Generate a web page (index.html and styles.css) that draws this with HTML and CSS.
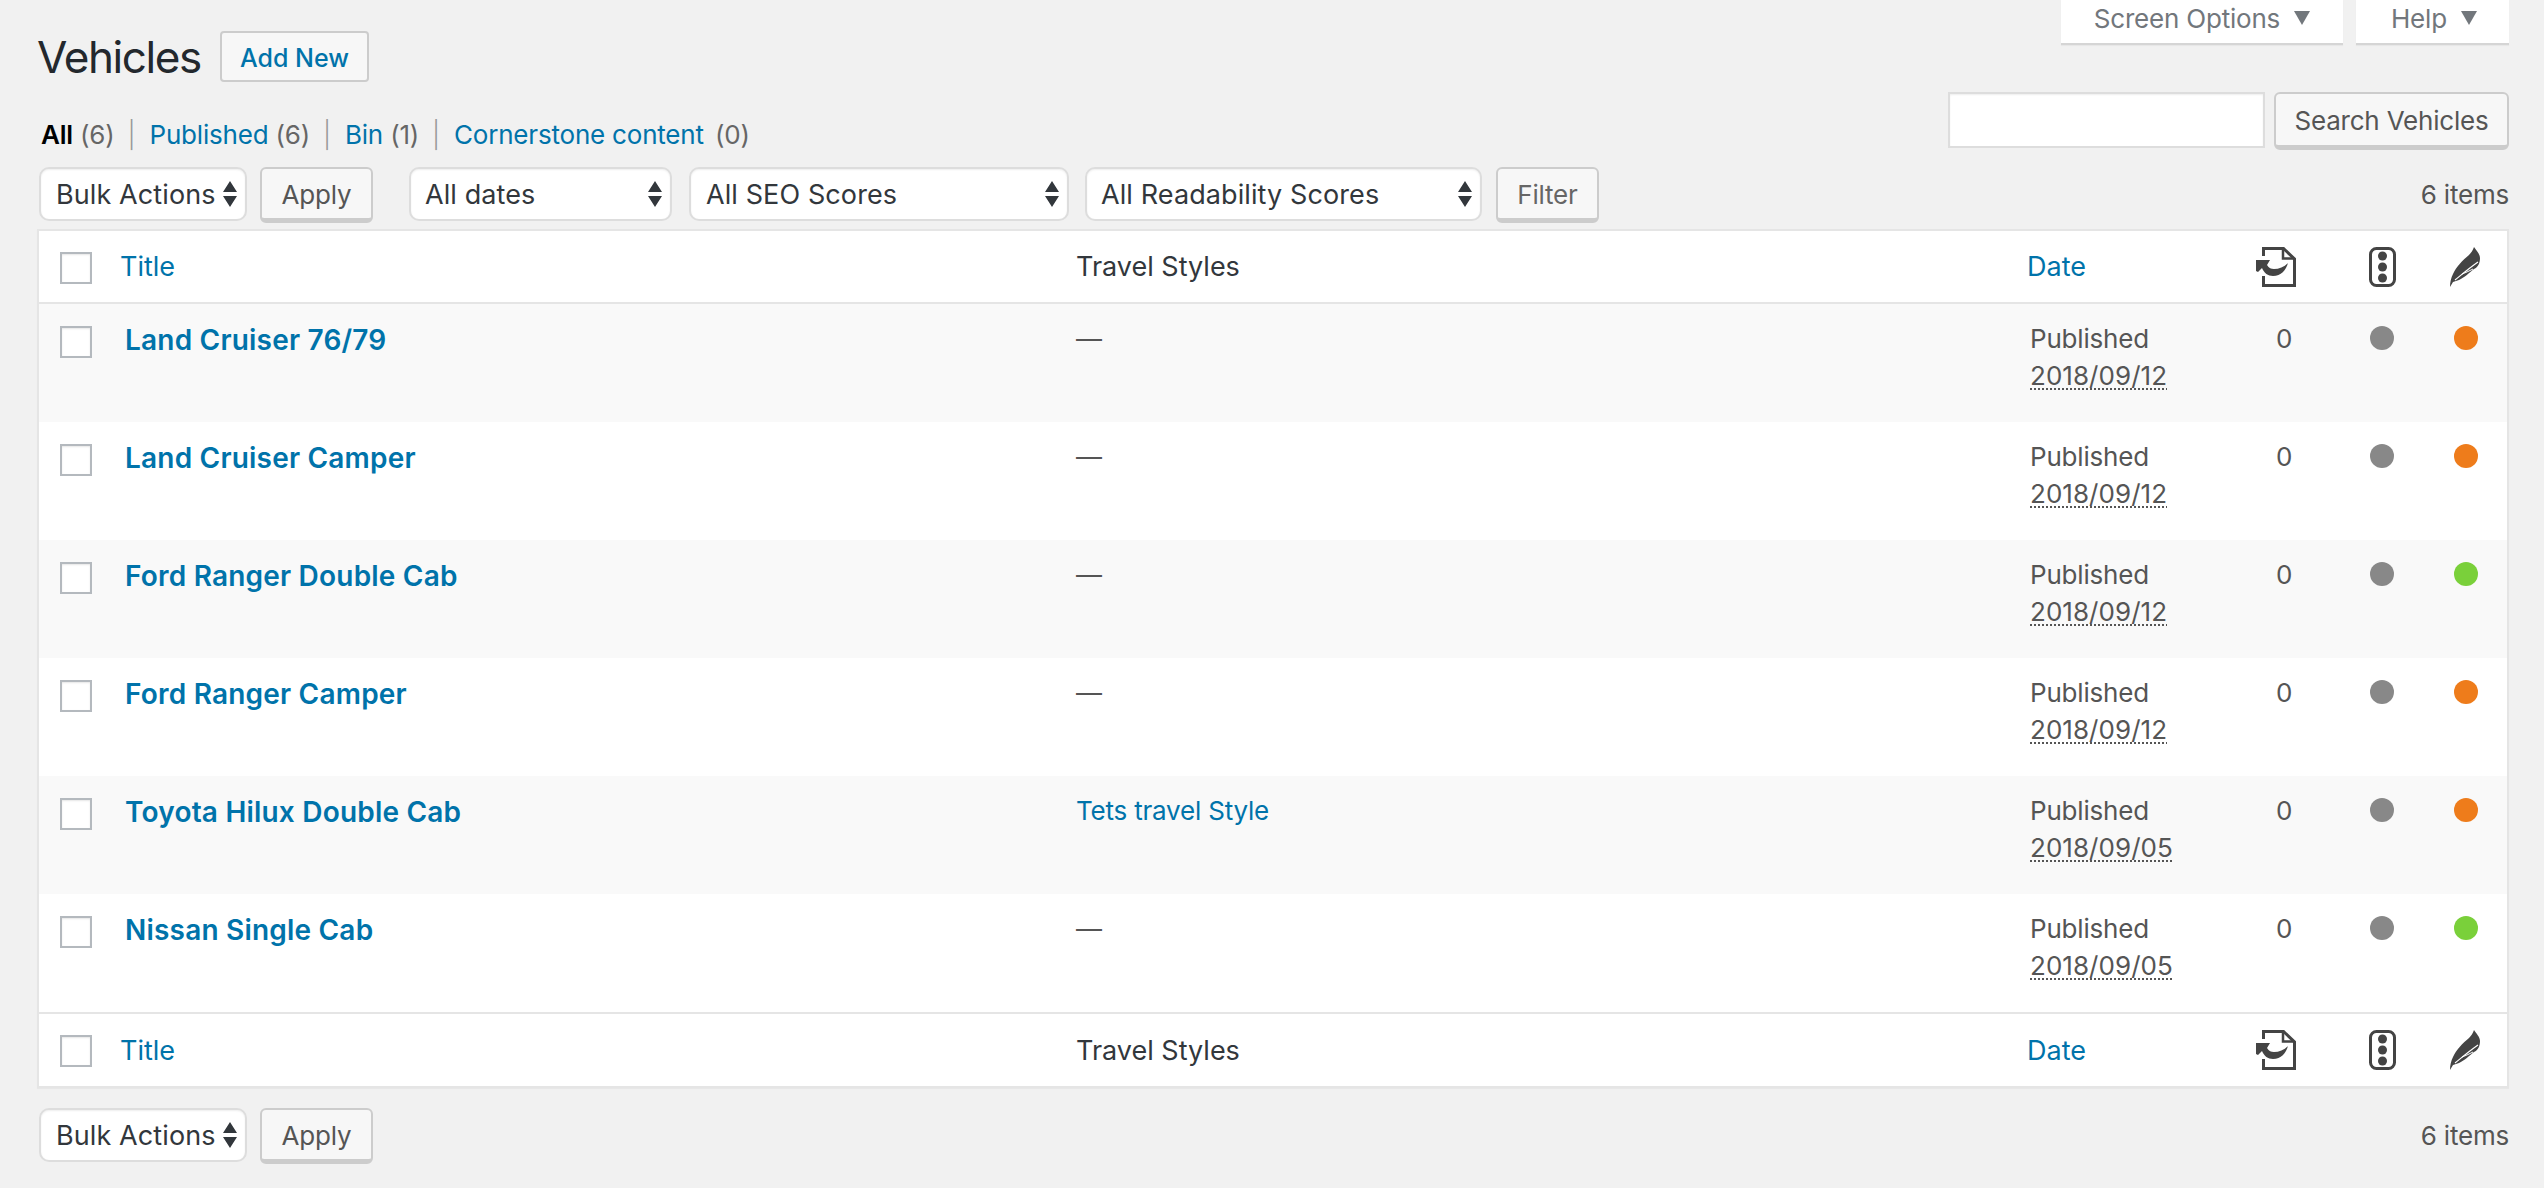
FILE: index.html
```html
<!DOCTYPE html>
<html lang="en">
<head>
    <meta charset="UTF-8">
    <title>Vehicles</title>
    <link rel="stylesheet" href="styles.css">
</head>
<body>
    <svg class="defs" width="0" height="0">
        <symbol id="icon-links" viewBox="0 0 40 40">
            <path d="M7.500 9V1.500H27.500L38.500 12V38.500H7.500V29" fill="none" stroke="#444" stroke-width="3"/>
            <path d="M27 1.500V11.500H38" fill="none" stroke="#444" stroke-width="2.500"/>
            <path d="M0 13H14L11 18C13 21 15 22 18 22C23 22 28 20 32 16C30 23 25 29 17 29C12 29 8 26 6 21L2 25L0 24Z" fill="#444"/>
        </symbol>
        <symbol id="icon-light" viewBox="0 0 27 40">
            <rect x="1.500" y="1.500" width="24" height="37" rx="6" fill="none" stroke="#444" stroke-width="3"/>
            <circle cx="13.500" cy="9" r="4.500" fill="#444"/>
            <circle cx="13.500" cy="20" r="4.500" fill="#444"/>
            <circle cx="13.500" cy="31" r="4.500" fill="#444"/>
        </symbol>
        <symbol id="icon-feather" viewBox="0 0 31 40">
            <path d="M24 0C26 3 30 7 30 11C30 16 28 20 24 22C20 25 14 31 9 33C7 34 5 34 3 35L0 40C0 35 1 31 3 27C6 20 13 13 19 8C21 6 23 3 24 0Z" fill="#444"/>
            <path d="M5 33C10 29 18 22 28 15" fill="none" stroke="#fff" stroke-width="1.200"/>
            <path d="M12 27C15 26 19 24 23 22" fill="none" stroke="#fff" stroke-width="1"/>
        </symbol>
    </svg>

    <div class="top">
        <div class="top-left">
            <div class="title-row">
                <h1>Vehicles</h1>
                <a class="add-new" href="#">Add New</a>
            </div>
            <ul class="subsub">
                <li><a class="current" href="#">All</a> <span>(6)</span></li>
                <li><a href="#">Published</a> <span>(6)</span></li>
                <li><a href="#">Bin</a> <span>(1)</span></li>
                <li><a href="#">Cornerstone content</a> <span class="gap">(0)</span></li>
            </ul>
        </div>
        <div class="top-right">
            <div class="tabs">
                <button class="tab tab-options">Screen Options <i class="caret"></i></button>
                <button class="tab tab-help">Help <i class="caret"></i></button>
            </div>
            <div class="search">
                <input type="search" class="search-input">
                <button class="btn btn-search">Search Vehicles</button>
            </div>
        </div>
    </div>

    <div class="tablenav">
        <select class="sel sel-bulk"><option>Bulk Actions</option></select>
        <button class="btn btn-apply">Apply</button>
        <select class="sel sel-dates"><option>All dates</option></select>
        <select class="sel sel-seo"><option>All SEO Scores</option></select>
        <select class="sel sel-read"><option>All Readability Scores</option></select>
        <button class="btn btn-filter">Filter</button>
        <span class="count">6 items</span>
    </div>

    <table class="list">
        <colgroup>
            <col class="c-cb"><col class="c-title"><col class="c-styles"><col class="c-date"><col class="c-links"><col class="c-seo"><col class="c-read">
        </colgroup>
        <thead>
            <tr>
                <th><span class="cb"></span></th>
                <th><a href="#">Title</a></th>
                <th>Travel Styles</th>
                <th><a href="#">Date</a></th>
                <th class="th-links"><svg class="ico i-links"><use href="#icon-links"/></svg></th>
                <th class="mid"><svg class="ico i-light"><use href="#icon-light"/></svg></th>
                <th class="mid"><svg class="ico i-feather"><use href="#icon-feather"/></svg></th>
            </tr>
        </thead>
        <tbody>
            <tr class="alt">
                <td><span class="cb"></span></td>
                <td class="name"><a href="#">Land Cruiser 76/79</a></td>
                <td>—</td>
                <td class="date">Published<br><abbr>2018/09/12</abbr></td>
                <td class="num">0</td>
                <td class="mid"><i class="dot grey"></i></td>
                <td class="mid"><i class="dot orange"></i></td>
            </tr>
            <tr>
                <td><span class="cb"></span></td>
                <td class="name"><a href="#">Land Cruiser Camper</a></td>
                <td>—</td>
                <td class="date">Published<br><abbr>2018/09/12</abbr></td>
                <td class="num">0</td>
                <td class="mid"><i class="dot grey"></i></td>
                <td class="mid"><i class="dot orange"></i></td>
            </tr>
            <tr class="alt">
                <td><span class="cb"></span></td>
                <td class="name"><a href="#">Ford Ranger Double Cab</a></td>
                <td>—</td>
                <td class="date">Published<br><abbr>2018/09/12</abbr></td>
                <td class="num">0</td>
                <td class="mid"><i class="dot grey"></i></td>
                <td class="mid"><i class="dot green"></i></td>
            </tr>
            <tr>
                <td><span class="cb"></span></td>
                <td class="name"><a href="#">Ford Ranger Camper</a></td>
                <td>—</td>
                <td class="date">Published<br><abbr>2018/09/12</abbr></td>
                <td class="num">0</td>
                <td class="mid"><i class="dot grey"></i></td>
                <td class="mid"><i class="dot orange"></i></td>
            </tr>
            <tr class="alt">
                <td><span class="cb"></span></td>
                <td class="name"><a href="#">Toyota Hilux Double Cab</a></td>
                <td><a href="#">Tets travel Style</a></td>
                <td class="date">Published<br><abbr>2018/09/05</abbr></td>
                <td class="num">0</td>
                <td class="mid"><i class="dot grey"></i></td>
                <td class="mid"><i class="dot orange"></i></td>
            </tr>
            <tr>
                <td><span class="cb"></span></td>
                <td class="name"><a href="#">Nissan Single Cab</a></td>
                <td>—</td>
                <td class="date">Published<br><abbr>2018/09/05</abbr></td>
                <td class="num">0</td>
                <td class="mid"><i class="dot grey"></i></td>
                <td class="mid"><i class="dot green"></i></td>
            </tr>
        </tbody>
        <tfoot>
            <tr>
                <th><span class="cb"></span></th>
                <th><a href="#">Title</a></th>
                <th>Travel Styles</th>
                <th><a href="#">Date</a></th>
                <th class="th-links"><svg class="ico i-links"><use href="#icon-links"/></svg></th>
                <th class="mid"><svg class="ico i-light"><use href="#icon-light"/></svg></th>
                <th class="mid"><svg class="ico i-feather"><use href="#icon-feather"/></svg></th>
            </tr>
        </tfoot>
    </table>

    <div class="tablenav tablenav-bottom">
        <select class="sel sel-bulk"><option>Bulk Actions</option></select>
        <button class="btn btn-apply">Apply</button>
        <span class="count">6 items</span>
    </div>
</body>
</html>
```

FILE: styles.css
```css
* {
    box-sizing: border-box;
}
body {
    margin: 0;
    padding: 0 35px 0 37px;
    background: #f1f1f1;
    color: #444;
    font-family: Inter, "Liberation Sans", sans-serif;
    font-size: 26px;
    line-height: 37px;
    letter-spacing: -0.2px;
    overflow: hidden;
}
a {
    color: #0073aa;
    text-decoration: none;
}
.defs {
    display: block;
    height: 0;
}

/* heading block */
.top {
    display: flex;
    justify-content: space-between;
    height: 167px;
}
.title-row {
    display: flex;
    align-items: center;
    gap: 19px;
    margin-top: 30px;
}
h1 {
    margin: 2px 0 0;
    color: #23282d;
    font-size: 44px;
    font-weight: 400;
    line-height: 51px;
    letter-spacing: -1.4px;
}
.add-new {
    width: 149px;
    height: 51px;
    border: 2px solid #ccc;
    border-radius: 4px;
    background: #f7f7f7;
    font-weight: 500;
    font-size: 25px;
    line-height: 50px;
    letter-spacing: 0;
    text-align: center;
}
.subsub {
    display: flex;
    margin: 33px 0 0 4px;
    padding: 0;
    list-style: none;
    color: #666;
}
.subsub li::after {
    content: "|";
    margin: 0 14px 0 13px;
    color: #999;
    font-weight: 300;
}
.subsub li:last-child::after {
    content: none;
}
.subsub .current {
    color: #000;
    font-weight: 600;
}
.subsub .gap {
    margin-left: 4px;
}
.top-right {
    display: flex;
    flex-direction: column;
    align-items: flex-end;
}
.tabs {
    display: flex;
    gap: 13px;
}
.tab {
    height: 45px;
    padding: 0 0 16px;
    border: 0;
    border-bottom: 2px solid #d5d5d5;
    background: #fff;
    box-shadow: 0 1px 1px rgba(0, 0, 0, 0.04);
    color: #72777c;
    font: inherit;
    letter-spacing: inherit;
}
.tab-options {
    width: 282px;
}
.tab-help {
    width: 153px;
    padding-left: 3px;
}
.caret {
    display: inline-block;
    width: 0;
    height: 0;
    margin: 0 0 3px 7px;
    border: 8px solid transparent;
    border-top: 14px solid #72777c;
    border-bottom: 0;
}
.search {
    display: flex;
    gap: 9px;
    margin-top: 47px;
}
.search-input {
    width: 317px;
    height: 56px;
    border: 2px solid #ddd;
    background: #fff;
    box-shadow: inset 0 1px 2px rgba(0, 0, 0, 0.07);
}

/* buttons and selects */
.btn {
    height: 56px;
    padding: 2px 0 0;
    border: 2px solid #ccc;
    border-bottom-width: 5px;
    border-radius: 6px;
    background: #f7f7f7;
    color: #555;
    font: inherit;
    letter-spacing: inherit;
}
.btn-search {
    width: 235px;
    height: 58px;
}
.btn-apply {
    width: 113px;
    margin-left: 13px;
}
.btn-filter {
    width: 103px;
    margin-left: 14px;
    color: #666;
}
.sel {
    height: 54px;
    padding: 0 0 0 15px;
    border: 2px solid #ddd;
    border-radius: 10px;
    background-color: #fff;
    background-image: url("data:image/svg+xml;utf8,<svg xmlns='http://www.w3.org/2000/svg' width='14' height='26'><path d='M7 0l7 11H0zM7 26L0 15h14z' fill='%2332373c'/></svg>");
    background-position: right 8px center;
    background-repeat: no-repeat;
    appearance: none;
    color: #32373c;
    font: inherit;
    font-size: 27px;
    letter-spacing: 0.1px;
    box-shadow: inset 0 1px 2px rgba(0, 0, 0, 0.07);
}
.sel-bulk {
    width: 208px;
    margin-left: 2px;
}
.sel-dates {
    width: 263px;
    margin-left: 36px;
    padding-left: 14px;
}
.sel-seo {
    width: 380px;
    margin-left: 17px;
}
.sel-read {
    width: 397px;
    margin-left: 16px;
    padding-left: 14px;
}
.tablenav {
    display: flex;
    align-items: flex-start;
    height: 62px;
}
.count {
    margin: 9px 0 0 auto;
    color: #555;
}
.tablenav-bottom {
    margin-top: 20px;
}

/* table */
.list {
    width: 2472px;
    border: 2px solid #e5e5e5;
    border-spacing: 0;
    table-layout: fixed;
    background: #fff;
    box-shadow: 0 1px 1px rgba(0, 0, 0, 0.04);
}
.c-cb { width: 65px; }
.c-title { width: 956px; }
.c-styles { width: 951px; }
.c-date { width: 229px; }
.c-links { width: 100px; }
.c-seo { width: 84px; }
.c-read { width: 83px; }
th {
    height: 73px;
    padding: 0 16px;
    color: #32373c;
    font-size: 27px;
    font-weight: 400;
    letter-spacing: 0;
    text-align: left;
    vertical-align: middle;
}
th:first-child,
td:first-child {
    padding: 0 0 0 21px;
}
th .cb {
    margin-top: 2px;
}
thead th {
    border-bottom: 2px solid #e5e5e5;
}
tfoot th {
    height: 74px;
    border-top: 2px solid #e5e5e5;
}
td {
    height: 118px;
    padding: 16px;
    vertical-align: top;
    color: #555;
}
td:first-child {
    padding-top: 22px;
}
.alt {
    background: #f9f9f9;
}
.cb {
    display: block;
    width: 32px;
    height: 32px;
    border: 2px solid #b4b9be;
    background: #fff;
    box-shadow: inset 0 1px 2px rgba(0, 0, 0, 0.1);
}
td.name {
    padding-top: 18px;
}
.name a {
    padding-left: 5px;
    font-weight: 600;
    font-size: 28px;
    letter-spacing: 0.2px;
}
.date {
    padding-left: 19px;
}
abbr {
    letter-spacing: 0.05px;
    text-decoration: underline dotted 2px #555;
    text-underline-offset: 3px;
}
.num {
    padding-left: 36px;
}
.th-links {
    padding-left: 16px;
}
th.mid,
td.mid {
    padding-left: 0;
    padding-right: 0;
    text-align: center;
}
.ico {
    display: block;
    height: 40px;
}
th.mid .ico {
    margin: 0 auto;
}
.i-links { width: 40px; }
.i-light { width: 27px; }
.i-feather { width: 31px; }
.dot {
    display: block;
    width: 24px;
    height: 24px;
    margin: 6px auto 0;
    border-radius: 50%;
}
.grey { background: #888; }
.orange { background: #ee7c1b; }
.green { background: #7ad03a; }
```
